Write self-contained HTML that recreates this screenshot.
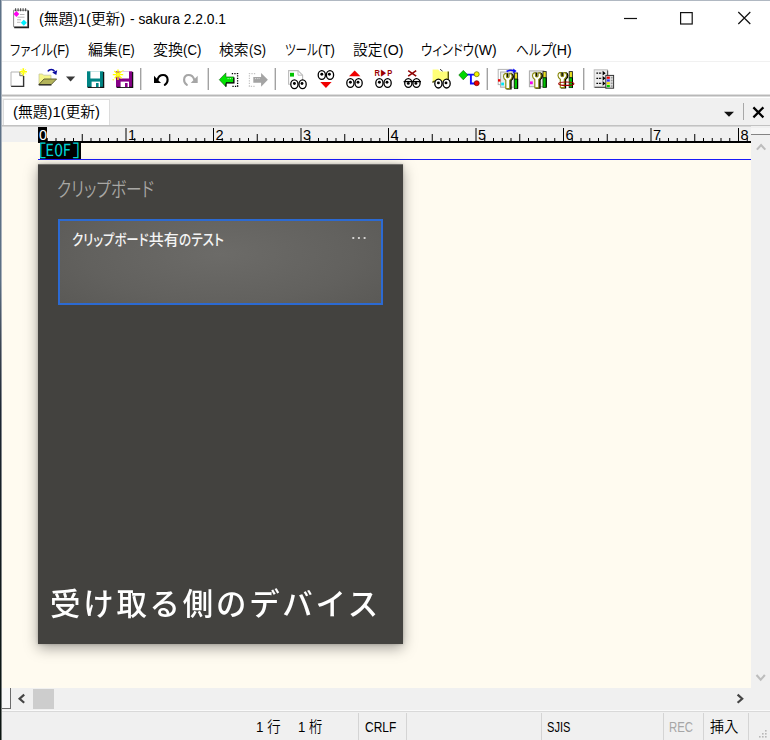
<!DOCTYPE html>
<html lang="ja">
<head>
<meta charset="utf-8">
<title>(無題)1(更新) - sakura 2.2.0.1</title>
<style>
*{box-sizing:border-box;margin:0;padding:0}
html,body{width:770px;height:740px;overflow:hidden;background:#fff}
body{position:relative;font-family:"Liberation Sans","Noto Sans CJK JP",sans-serif;font-size:15px;color:#000;font-weight:350}
.a{position:absolute}
.t{position:absolute;white-space:nowrap;line-height:20px;height:20px}
.p{position:absolute;left:0;top:0;white-space:nowrap;transform-origin:0 0;line-height:inherit}
.k{font-feature-settings:"palt"}
.m{font-family:"IPAGothic","Liberation Mono",monospace}
#edgeL{left:0;top:0;width:1px;height:740px;background:linear-gradient(#5d7288 0,#5c6f84 280px,#3c4552 345px,#1e2733 410px,#151d22 520px,#0a1410 740px)}
#edgeL2{left:1px;top:0;width:1px;height:740px;background:linear-gradient(#a9b3be 0,#a8b0ba 280px,#90959c 345px,#80848a 410px,#7c8082 520px,#787c7a 740px)}
#edgeT{left:0;top:0;width:770px;height:1px;background:#b0b8c2}
#tbline{left:2px;top:94px;width:768px;height:3px;background:linear-gradient(#dedede 0,#dedede 1px,#b8b8b8 1px,#b8b8b8 2px,#dadada 2px)}
#tabbar{left:2px;top:98px;width:768px;height:27px;background:#f0f0f0}
#tab{left:3px;top:99px;width:107px;height:26px;background:#fff;border:1px solid #dcdcdc;border-bottom:none}
#rulerline{left:2px;top:125px;width:768px;height:2px;background:linear-gradient(#c2c2c2 0,#c2c2c2 1px,#d6d6d6 1px)}
#ruler{left:2px;top:127px;width:749px;height:15px;background:#f0f0f0}
#rbase{left:38px;top:141px;width:713px;height:1.5px;background:#000}
#r0{left:38px;top:127px;width:9px;height:15px;background:#000}
#editor{left:2px;top:142px;width:749px;height:546px;background:#fffbf0}
#eofbg{left:39.7px;top:142px;width:41.6px;height:16.6px;background:#000}
#blue{left:38px;top:159px;width:713px;height:1.3px;background:#1a1af8}
#vsb{left:751px;top:126px;width:19px;height:563px;background:#f0f0f0}
#vsplit{left:751px;top:128px;width:19px;height:7px;background:#f6f6f6;border-bottom:1px solid #848484}
#hsb{left:2px;top:688px;width:768px;height:21px;background:#f0f0f0}
#hsplit{left:2px;top:688px;width:9px;height:21px;background:#f8f8f8;border-right:1px solid #6c6c6c;border-bottom:1px solid #6c6c6c}
#hthumb{left:33px;top:689px;width:21px;height:19.5px;background:#cdcdcd}
#status{left:2px;top:709px;width:768px;height:31px;background:#f0f0f0}
#stline{left:2px;top:710px;width:768px;height:2px;background:linear-gradient(#fafafa 0,#fafafa 1px,#d9d9d9 1px)}
.vs{position:absolute;top:713px;width:1px;height:27px;background:#d4d4d4}
#panel{left:37.5px;top:164px;width:365.5px;height:480px;background:#43423f;border-top:1px solid #6f6d6a;box-shadow:0 4px 13px rgba(0,0,0,.36),0 0 3px rgba(0,0,0,.2)}
#card{left:58px;top:219px;width:325.2px;height:85.5px;background:radial-gradient(ellipse 75% 110% at 50% 40%,#6c6b68 0,#62615e 55%,#575653 100%);border:2.8px solid #2c6ad2}
</style>
</head>
<body>
<div class="a" id="tbline"></div>
<div class="a" id="tabbar"></div>
<div class="a" id="tab"></div>
<div class="a" id="rulerline"></div>
<div class="a" id="ruler"></div>
<div class="a" id="editor"></div>
<div class="a" id="rbase"></div>
<div class="a" id="r0"></div>
<div class="a" id="eofbg"></div>
<div class="a" id="blue"></div>
<div class="a" id="vsb"></div>
<div class="a" id="vsplit"></div>
<div class="a" id="hsb"></div>
<div class="a" id="hsplit"></div>
<div class="a" id="hthumb"></div>
<div class="a" id="status"></div>
<div class="a" id="stline"></div>
<div class="vs" style="left:358px"></div>
<div class="vs" style="left:406px"></div>
<div class="vs" style="left:541px"></div>
<div class="vs" style="left:663px"></div>
<div class="vs" style="left:703px"></div>
<div class="vs" style="left:748px"></div>
<div class="a" id="panel"></div>
<div class="a" id="card"></div>
<div class="a" id="edgeT"></div>
<div class="a" id="edgeL"></div>
<div class="a" id="edgeL2"></div>

<svg class="a" style="left:0;top:0" width="770" height="740" viewBox="0 0 770 740">
<g fill="#000"><rect x="38" y="128" width="1" height="13"/><rect x="46.75" y="138" width="1" height="3"/><rect x="55.5" y="138" width="1" height="3"/><rect x="64.25" y="138" width="1" height="3"/><rect x="73" y="138" width="1" height="3"/><rect x="81.75" y="134" width="1" height="7"/><rect x="90.5" y="138" width="1" height="3"/><rect x="99.25" y="138" width="1" height="3"/><rect x="108" y="138" width="1" height="3"/><rect x="116.75" y="138" width="1" height="3"/><rect x="125.5" y="128" width="1" height="13"/><rect x="134.25" y="138" width="1" height="3"/><rect x="143" y="138" width="1" height="3"/><rect x="151.75" y="138" width="1" height="3"/><rect x="160.5" y="138" width="1" height="3"/><rect x="169.25" y="134" width="1" height="7"/><rect x="178" y="138" width="1" height="3"/><rect x="186.75" y="138" width="1" height="3"/><rect x="195.5" y="138" width="1" height="3"/><rect x="204.25" y="138" width="1" height="3"/><rect x="213" y="128" width="1" height="13"/><rect x="221.75" y="138" width="1" height="3"/><rect x="230.5" y="138" width="1" height="3"/><rect x="239.25" y="138" width="1" height="3"/><rect x="248" y="138" width="1" height="3"/><rect x="256.75" y="134" width="1" height="7"/><rect x="265.5" y="138" width="1" height="3"/><rect x="274.25" y="138" width="1" height="3"/><rect x="283" y="138" width="1" height="3"/><rect x="291.75" y="138" width="1" height="3"/><rect x="300.5" y="128" width="1" height="13"/><rect x="309.25" y="138" width="1" height="3"/><rect x="318" y="138" width="1" height="3"/><rect x="326.75" y="138" width="1" height="3"/><rect x="335.5" y="138" width="1" height="3"/><rect x="344.25" y="134" width="1" height="7"/><rect x="353" y="138" width="1" height="3"/><rect x="361.75" y="138" width="1" height="3"/><rect x="370.5" y="138" width="1" height="3"/><rect x="379.25" y="138" width="1" height="3"/><rect x="388" y="128" width="1" height="13"/><rect x="396.75" y="138" width="1" height="3"/><rect x="405.5" y="138" width="1" height="3"/><rect x="414.25" y="138" width="1" height="3"/><rect x="423" y="138" width="1" height="3"/><rect x="431.75" y="134" width="1" height="7"/><rect x="440.5" y="138" width="1" height="3"/><rect x="449.25" y="138" width="1" height="3"/><rect x="458" y="138" width="1" height="3"/><rect x="466.75" y="138" width="1" height="3"/><rect x="475.5" y="128" width="1" height="13"/><rect x="484.25" y="138" width="1" height="3"/><rect x="493" y="138" width="1" height="3"/><rect x="501.75" y="138" width="1" height="3"/><rect x="510.5" y="138" width="1" height="3"/><rect x="519.25" y="134" width="1" height="7"/><rect x="528" y="138" width="1" height="3"/><rect x="536.75" y="138" width="1" height="3"/><rect x="545.5" y="138" width="1" height="3"/><rect x="554.25" y="138" width="1" height="3"/><rect x="563" y="128" width="1" height="13"/><rect x="571.75" y="138" width="1" height="3"/><rect x="580.5" y="138" width="1" height="3"/><rect x="589.25" y="138" width="1" height="3"/><rect x="598" y="138" width="1" height="3"/><rect x="606.75" y="134" width="1" height="7"/><rect x="615.5" y="138" width="1" height="3"/><rect x="624.25" y="138" width="1" height="3"/><rect x="633" y="138" width="1" height="3"/><rect x="641.75" y="138" width="1" height="3"/><rect x="650.5" y="128" width="1" height="13"/><rect x="659.25" y="138" width="1" height="3"/><rect x="668" y="138" width="1" height="3"/><rect x="676.75" y="138" width="1" height="3"/><rect x="685.5" y="138" width="1" height="3"/><rect x="694.25" y="134" width="1" height="7"/><rect x="703" y="138" width="1" height="3"/><rect x="711.75" y="138" width="1" height="3"/><rect x="720.5" y="138" width="1" height="3"/><rect x="729.25" y="138" width="1" height="3"/><rect x="738" y="128" width="1" height="13"/><rect x="746.75" y="138" width="1" height="3"/></g>

<g>
<path d="M13.6 10.2h14.2v16.6h-14.2z" fill="#fff" stroke="#8a8a8a" stroke-width="1"/>
<path d="M28.3 10.5v17H14.2" fill="none" stroke="#222" stroke-width="1.5"/>
<path d="M15.6 11.2v-3" stroke="#4a4a4a" stroke-width="1.1" fill="none"/>
<path d="M18.1 11.2v-3" stroke="#4a4a4a" stroke-width="1.1" fill="none"/>
<path d="M20.6 11.2v-3" stroke="#4a4a4a" stroke-width="1.1" fill="none"/>
<path d="M23.1 11.2v-3" stroke="#4a4a4a" stroke-width="1.1" fill="none"/>
<path d="M25.6 11.2v-3" stroke="#4a4a4a" stroke-width="1.1" fill="none"/>
<path d="M20 14.5H24.5" stroke="#b8b8b8" stroke-width="1"/>
<path d="M17.5 17.2H24.5" stroke="#b8b8b8" stroke-width="1"/>
<path d="M17 19.8H21" stroke="#b8b8b8" stroke-width="1"/>
<path d="M17 22.3H20.5" stroke="#b8b8b8" stroke-width="1"/>
<path d="M16.4 11l2.9 3-2.9 3-2.9-3z" fill="#ff00f0"/>
<path d="M23.8 19.7l3 3-3 3-3-3z" fill="#00f0ff"/>
</g>
<path d="M624 18.5h13" stroke="#111" stroke-width="1.2"/>
<rect x="680.6" y="12.6" width="11.6" height="11.4" fill="none" stroke="#111" stroke-width="1.2"/>
<path d="M738.3 12l12 12M750.3 12l-12 12" stroke="#111" stroke-width="1.2" fill="none"/>
<rect x="2" y="61" width="768" height="1" fill="#f1f1f1"/>
<path d="M11 72h8.8l3.7 3.7v10.6H11z" fill="#fff" stroke="#b4b4b4" stroke-width="1"/>
<path d="M19.8 72v3.7h3.7" fill="#e8e8e8" stroke="#777" stroke-width="1"/>
<path d="M23.6 76v10.4H11.2" fill="none" stroke="#333" stroke-width="1.4"/>
<path d="M23.3 68.2v7.2M19.7 71.8h7.2" stroke="#ffff00" stroke-width="1.6"/>
<path d="M20.8 69.3l5 5M25.8 69.3l-5 5" stroke="#ffff30" stroke-width="1"/>
<path d="M39 74h3.5l1 1.2h7.5v9H39z" fill="#f6f68a" stroke="#c8c8a0" stroke-width=".8"/>
<path d="M44 79h12.6l-5.4 5.6H38.8z" fill="#b4b45a" stroke="#55552a" stroke-width=".9"/>
<path d="M38.8 84.9h12.6" stroke="#222" stroke-width="1.2"/>
<path d="M47.8 71.4c1.8-2.6 5.2-2.6 6.8 0" fill="none" stroke="#0a0aa0" stroke-width="1.6"/>
<path d="M52.2 72.4l5-2.2-.9 4.9z" fill="#0a0aa0"/>
<path d="M66 76.6h9.2l-4.6 5z" fill="#3a3a3a"/>
<rect x="87" y="71.3" width="16.4" height="15.8" fill="#008484"/>
<path d="M103.6 72v15.4H87.6" fill="none" stroke="#111" stroke-width="1.3"/>
<rect x="90.4" y="71.3" width="9.6" height="7.2" fill="#fff"/>
<rect x="91.6" y="81.6" width="8.4" height="5.5" fill="#fff"/>
<rect x="96" y="83" width="2.6" height="4.1" fill="#008484"/>
<rect x="116" y="71.3" width="16.4" height="15.8" fill="#860086"/>
<path d="M132.6 72v15.4H116.6" fill="none" stroke="#111" stroke-width="1.3"/>
<rect x="119.4" y="71.3" width="9.6" height="7.2" fill="#fff"/>
<rect x="120.6" y="81.6" width="8.4" height="5.5" fill="#fff"/>
<rect x="125" y="83" width="2.6" height="4.1" fill="#860086"/>
<g stroke="#ffff00" stroke-width="1.3" fill="none"><path d="M118 69.4v10.6M112.8 74.7h10.4M114.4 71l7.4 7.4M121.6 71.2l-7 7"/></g>
<circle cx="118" cy="74.7" r="1.8" fill="#ffff20"/>
<circle cx="113.2" cy="79.8" r=".8" fill="#ffff20"/><circle cx="123" cy="70.6" r=".7" fill="#ffff20"/>
<rect x="140" y="68" width="1.4" height="22" fill="#a2a2a2"/>
<g><path d="M157.6 79.4c1.6-5.6 9.6-6 10 .2c.1 2.4-1.1 4.2-2.8 5.2" fill="none" stroke="#000" stroke-width="2.1" stroke-linecap="round"/>
<path d="M154 75.8v7.2h7z" fill="#000"/></g>
<g transform="translate(351.7 0) scale(-1 1)"><path d="M157.6 79.4c1.6-5.6 9.6-6 10 .2c.1 2.4-1.1 4.2-2.8 5.2" fill="none" stroke="#a6a6a6" stroke-width="2.1" stroke-linecap="round"/>
<path d="M154 75.8v7.2h7z" fill="#a6a6a6"/></g>
<rect x="207.6" y="68" width="1.4" height="22" fill="#a2a2a2"/>
<path d="M231.8 73.6h5.8v12.8h-5.8" fill="none" stroke="#000" stroke-width="1.3" stroke-dasharray="1.3 1.2"/>
<path d="M219.3 79.7l6.6-6.8v4h7.8v5.9h-7.8v4z" fill="#00e400" stroke="#0a5a0a" stroke-width=".6"/>
<path d="M226 82.9h7.9v-5.4M226 86.6v-3.2" fill="none" stroke="#000" stroke-width="1.2"/>
<path d="M227.5 78.6h5" stroke="#d8ffd8" stroke-width=".9" stroke-dasharray="1.2 1"/>
<path d="M255.2 73.6h-5.8v12.8h5.8" fill="none" stroke="#c4c4c4" stroke-width="1.2" stroke-dasharray="1.3 1.2"/>
<path d="M267.9 79.7l-6.8-6.8v4h-7.8v5.9h7.8v4z" fill="#a4a4a4"/>
<path d="M255 78.6h5" stroke="#e0e0e0" stroke-width=".9" stroke-dasharray="1.2 1"/>
<rect x="274.6" y="68" width="1.4" height="22" fill="#a2a2a2"/>
<path d="M288.6 70.6h9.4l4.6 4.6v9h-14z" fill="#fff" stroke="#bcbcbc" stroke-width="1.1"/>
<path d="M298 70.6v4.6h4.6" fill="none" stroke="#bcbcbc" stroke-width="1"/>
<rect x="290" y="72.8" width="4" height="3.8" fill="#00c400"/>
<ellipse cx="294.4" cy="84.2" rx="3.6" ry="4.4" fill="#fff" stroke="#000" stroke-width="1.3"/>
<circle cx="294.4" cy="83.5" r="1.45" fill="#000"/>
<ellipse cx="302.59999999999997" cy="84.2" rx="3.6" ry="4.4" fill="#fff" stroke="#000" stroke-width="1.3"/>
<circle cx="301.99999999999994" cy="83.5" r="1.45" fill="#000"/>
<ellipse cx="321.8" cy="75" rx="3.6" ry="4.4" fill="#fff" stroke="#000" stroke-width="1.3"/>
<circle cx="321.8" cy="74.3" r="1.45" fill="#000"/>
<ellipse cx="330.0" cy="75" rx="3.6" ry="4.4" fill="#fff" stroke="#000" stroke-width="1.3"/>
<circle cx="329.4" cy="74.3" r="1.45" fill="#000"/>
<path d="M320.3 82h11.3l-5.65 5.9z" fill="#f00000"/>
<path d="M349 76.3h11.4l-5.7-5.8z" fill="#f00000"/>
<ellipse cx="350.4" cy="83" rx="3.6" ry="4.4" fill="#fff" stroke="#000" stroke-width="1.3"/>
<circle cx="350.4" cy="82.3" r="1.45" fill="#000"/>
<ellipse cx="358.59999999999997" cy="83" rx="3.6" ry="4.4" fill="#fff" stroke="#000" stroke-width="1.3"/>
<circle cx="357.99999999999994" cy="82.3" r="1.45" fill="#000"/>
<text x="374.6" y="76.4" font-family="Liberation Sans,sans-serif" font-weight="700" font-size="8.4" fill="#9a0000" textLength="17.6" lengthAdjust="spacingAndGlyphs">R▶P</text>
<ellipse cx="379.4" cy="83" rx="3.6" ry="4.4" fill="#fff" stroke="#000" stroke-width="1.3"/>
<circle cx="379.4" cy="82.3" r="1.45" fill="#000"/>
<ellipse cx="387.59999999999997" cy="83" rx="3.6" ry="4.4" fill="#fff" stroke="#000" stroke-width="1.3"/>
<circle cx="386.99999999999994" cy="82.3" r="1.45" fill="#000"/>
<path d="M408.2 70.6l8 5.6M416.2 70.6l-8 5.6" stroke="#900000" stroke-width="1.5"/>
<ellipse cx="408.3" cy="83" rx="3.6" ry="4.4" fill="#fff" stroke="#000" stroke-width="1.3"/>
<circle cx="408.3" cy="83.4" r="1.45" fill="#000"/>
<ellipse cx="416.5" cy="83" rx="3.6" ry="4.4" fill="#fff" stroke="#000" stroke-width="1.3"/>
<circle cx="415.9" cy="83.4" r="1.45" fill="#000"/>
<path d="M403.6 81.6h17.4" stroke="#000" stroke-width="1.3"/>
<path d="M405.2 81h6.2M413.4 81h6.2" stroke="#fff" stroke-width="0"/>
<path d="M432.6 69.4h5.6l1.6 2h8.4v9.6h-15.6z" fill="#ffff78"/>
<path d="M448.3 71.4v9.4" stroke="#55550a" stroke-width="1.4"/>
<path d="M440 69.2l2.6 2" stroke="#444" stroke-width="1"/>
<path d="M432.4 82.4l2.4-1.6" stroke="#55550a" stroke-width="1.4"/>
<ellipse cx="438.4" cy="83.6" rx="3.6" ry="4.4" fill="#fff" stroke="#000" stroke-width="1.3"/>
<circle cx="438.4" cy="82.89999999999999" r="1.45" fill="#000"/>
<ellipse cx="446.59999999999997" cy="83.6" rx="3.6" ry="4.4" fill="#fff" stroke="#000" stroke-width="1.3"/>
<circle cx="445.99999999999994" cy="82.89999999999999" r="1.45" fill="#000"/>
<path d="M470.9 74.6v8.9h4.5M466 74.6h9" fill="none" stroke="#1010ff" stroke-width="1.9"/>
<path d="M463.3 70.4l4.5 4.6-4.5 4.8-4.5-4.8z" fill="#00d800" stroke="#087008" stroke-width=".7"/>
<circle cx="476.7" cy="74.2" r="2.5" fill="#f4f400" stroke="#606000" stroke-width=".7"/>
<circle cx="476.7" cy="83.2" r="2.5" fill="#f00000" stroke="#600000" stroke-width=".7"/>
<rect x="486.6" y="68" width="1.4" height="22" fill="#a2a2a2"/>
<rect x="498.2" y="69.4" width="14" height="15.2" fill="#fff" stroke="#b4b4b4" stroke-width="1"/>
<rect x="500.6" y="72" width="13.4" height="15.2" fill="#ececec" stroke="#aaa" stroke-width="1"/>
<path d="M506.6 71.4c2.4-1.4 5-1.4 7.4-.6" fill="none" stroke="#0a0aff" stroke-width="1.7"/>
<path d="M513.2 68.4l3.4 2.6-3.4 2.6z" fill="#0a0aff"/>
<rect x="498" y="79.2" width="2.4" height="2.4" fill="#e80000"/>
<rect x="501.2" y="82.6" width="2.8" height="2.8" fill="#00e8f8"/>
<path d="M505.2 73.6C503.0 74.6 502.59999999999997 78.19999999999999 505.8 80.19999999999999V88.6H509.8V80.19999999999999C513.0 78.19999999999999 512.6 74.6 510.4 73.6H509.09999999999997V76.6C509.09999999999997 78.19999999999999 506.5 78.19999999999999 506.5 76.6V73.6Z" fill="#000" stroke="#000" stroke-width="1.2" transform="translate(1.25 .3)"/>
<path d="M505.2 73.6C503.0 74.6 502.59999999999997 78.19999999999999 505.8 80.19999999999999V88.6H509.8V80.19999999999999C513.0 78.19999999999999 512.6 74.6 510.4 73.6H509.09999999999997V76.6C509.09999999999997 78.19999999999999 506.5 78.19999999999999 506.5 76.6V73.6Z" fill="#fff" stroke="#8a8a10" stroke-width="1.15" stroke-linejoin="round"/>
<rect x="514.4" y="73" width="3.2" height="6.2" fill="#e8e020" stroke="#222" stroke-width=".9"/>
<rect x="514.4" y="79.2" width="3.2" height="9.399999999999999" fill="#00c400" stroke="#0a3a0a" stroke-width=".9"/>
<path d="M517.6999999999999 79v9.6" stroke="#000" stroke-width="1"/>
<rect x="529.4" y="70.9" width="14.4" height="15.8" fill="#ececec" stroke="#aaa" stroke-width="1"/>
<rect x="530" y="81.4" width="2.8" height="2.8" fill="#f800f0"/>
<path d="M534.2 72.8C532.0 73.8 531.6 77.39999999999999 534.8000000000001 79.39999999999999V87.8H538.8000000000001V79.39999999999999C542.0 77.39999999999999 541.6 73.8 539.4000000000001 72.8H538.1V75.8C538.1 77.39999999999999 535.5 77.39999999999999 535.5 75.8V72.8Z" fill="#000" stroke="#000" stroke-width="1.2" transform="translate(1.25 .3)"/>
<path d="M534.2 72.8C532.0 73.8 531.6 77.39999999999999 534.8000000000001 79.39999999999999V87.8H538.8000000000001V79.39999999999999C542.0 77.39999999999999 541.6 73.8 539.4000000000001 72.8H538.1V75.8C538.1 77.39999999999999 535.5 77.39999999999999 535.5 75.8V72.8Z" fill="#fff" stroke="#8a8a10" stroke-width="1.15" stroke-linejoin="round"/>
<rect x="543" y="71.6" width="3.2" height="6.2" fill="#e8e020" stroke="#222" stroke-width=".9"/>
<rect x="543" y="77.8" width="3.2" height="9.600000000000001" fill="#00c400" stroke="#0a3a0a" stroke-width=".9"/>
<path d="M546.3 77.6v9.8" stroke="#000" stroke-width="1"/>
<path d="M559.7 72.6C557.5 73.6 557.1 77.19999999999999 560.3000000000001 79.19999999999999V87.6H564.3000000000001V79.19999999999999C567.5 77.19999999999999 567.1 73.6 564.9000000000001 72.6H563.6V75.6C563.6 77.19999999999999 561.0 77.19999999999999 561.0 75.6V72.6Z" fill="#000" stroke="#000" stroke-width="1.2" transform="translate(1.25 .3)"/>
<path d="M559.7 72.6C557.5 73.6 557.1 77.19999999999999 560.3000000000001 79.19999999999999V87.6H564.3000000000001V79.19999999999999C567.5 77.19999999999999 567.1 73.6 564.9000000000001 72.6H563.6V75.6C563.6 77.19999999999999 561.0 77.19999999999999 561.0 75.6V72.6Z" fill="#fff" stroke="#8a8a10" stroke-width="1.15" stroke-linejoin="round"/>
<rect x="569.2" y="71.6" width="3.2" height="6.2" fill="#e8e020" stroke="#222" stroke-width=".9"/>
<rect x="569.2" y="77.8" width="3.2" height="9.8" fill="#00c400" stroke="#0a3a0a" stroke-width=".9"/>
<path d="M572.5 77.6v10" stroke="#000" stroke-width="1"/>
<ellipse cx="566.3" cy="83.7" rx="7.6" ry="1.7" fill="none" stroke="#a40000" stroke-width="1.2"/>
<rect x="583" y="68" width="1.4" height="22" fill="#a2a2a2"/>
<rect x="594.2" y="69.8" width="13.2" height="17.4" fill="#ededed" stroke="#bdbdbd" stroke-width="1"/>
<path d="M607.6 70.4v17H594.6" fill="none" stroke="#555" stroke-width="1.2"/>
<path d="M596.4 73.2h5.6" stroke="#000" stroke-width="1.3" stroke-dasharray="1.7 1"/>
<path d="M602.6 70.8l3 2.4-3 2.4z" fill="#000"/>
<path d="M596.4 78.3h5.6" stroke="#000" stroke-width="1.3" stroke-dasharray="1.7 1"/>
<path d="M602.6 75.89999999999999l3 2.4-3 2.4z" fill="#000"/>
<path d="M596.4 83.4h5.6" stroke="#000" stroke-width="1.3" stroke-dasharray="1.7 1"/>
<path d="M602.6 81.0l3 2.4-3 2.4z" fill="#000"/>
<rect x="605.8" y="75.4" width="7.8" height="12.8" fill="#e4e4e4" stroke="#333" stroke-width="1"/>
<rect x="606.8" y="76.6" width="3" height="2.2" fill="#f00000"/>
<rect x="610.8" y="76.89999999999999" width="1.8" height="1.6" fill="#999"/>
<rect x="606.8" y="79.4" width="3" height="2.2" fill="#3030ff"/>
<rect x="610.8" y="79.7" width="1.8" height="1.6" fill="#999"/>
<rect x="606.8" y="82.2" width="3" height="2.2" fill="#f0e000"/>
<rect x="610.8" y="82.5" width="1.8" height="1.6" fill="#999"/>
<rect x="606.8" y="85" width="3" height="2.2" fill="#00c800"/>
<rect x="610.8" y="85.3" width="1.8" height="1.6" fill="#999"/>
<path d="M724 111.8h10l-5 5z" fill="#111"/>
<rect x="743" y="103" width="1" height="17" fill="#a8a8a8"/>
<path d="M753.4 107.4l10 10M763.4 107.4l-10 10" stroke="#000" stroke-width="2.2" fill="none"/>
<path d="M756.9 149.6l4.2-4.5 4.2 4.5" fill="none" stroke="#bdbdbd" stroke-width="2.1"/>
<path d="M756.5 675l4.2 4.6 4.2-4.6" fill="none" stroke="#bdbdbd" stroke-width="2.1"/>
<path d="M24.2 694.6l-4.6 4.1 4.6 4.1" fill="none" stroke="#454545" stroke-width="2.2"/>
<path d="M737.6 694.6l4.6 4.1-4.6 4.1" fill="none" stroke="#454545" stroke-width="2.2"/>
<rect x="765" y="736" width="1.6" height="1.6" fill="#b8b8b8"/>
<rect x="762" y="736" width="1.6" height="1.6" fill="#b8b8b8"/>
<rect x="759" y="736" width="1.6" height="1.6" fill="#b8b8b8"/>
<rect x="765" y="733" width="1.6" height="1.6" fill="#b8b8b8"/>
<rect x="762" y="733" width="1.6" height="1.6" fill="#b8b8b8"/>
<rect x="765" y="730" width="1.6" height="1.6" fill="#b8b8b8"/>
<rect x="352.3" y="236.9" width="2" height="2" rx=".4" fill="#d6d5d3"/>
<rect x="357.9" y="236.9" width="2" height="2" rx=".4" fill="#d6d5d3"/>
<rect x="363.6" y="236.9" width="2" height="2" rx=".4" fill="#d6d5d3"/>
</svg>

<div class="t" id="title" style="left:39px;top:9px;font-size:15px;"><span class="p" style="transform:scaleX(0.9736);">(無題)1(更新)</span> <span class="p" style="left:90.9px;transform:scaleX(0.9210);">- sakura 2.2.0.1</span></div>
<div class="t" id="m1" style="left:9.7px;top:40px;font-size:15px;"><span class="p k" style="transform:scaleX(0.8257);">ファイル</span><span class="p" style="left:42.9px;transform:scaleX(0.8561);">(F)</span></div>
<div class="t" id="m2" style="left:88px;top:40px;font-size:15px;"><span class="p" style="transform:scaleX(0.9928);">編集</span><span class="p" style="left:29.8px;transform:scaleX(0.8300);">(E)</span></div>
<div class="t" id="m3" style="left:153px;top:40px;font-size:15px;"><span class="p" style="transform:scaleX(1.0028);">変換</span><span class="p" style="left:30.1px;transform:scaleX(0.8786);">(C)</span></div>
<div class="t" id="m4" style="left:219.3px;top:40px;font-size:15px;"><span class="p" style="transform:scaleX(0.9862);">検索</span><span class="p" style="left:29.6px;transform:scaleX(0.8500);">(S)</span></div>
<div class="t" id="m5" style="left:284.7px;top:40px;font-size:15px;"><span class="p k" style="transform:scaleX(0.7718);">ツール</span><span class="p" style="left:32.9px;transform:scaleX(0.8822);">(T)</span></div>
<div class="t" id="m6" style="left:353.2px;top:40px;font-size:15px;"><span class="p" style="transform:scaleX(0.9795);">設定</span><span class="p" style="left:29.4px;transform:scaleX(0.9413);">(O)</span></div>
<div class="t" id="m7" style="left:421px;top:40px;font-size:15px;"><span class="p k" style="transform:scaleX(0.8306);">ウィンドウ</span><span class="p" style="left:53px;transform:scaleX(0.9356);">(W)</span></div>
<div class="t" id="m8" style="left:515.7px;top:40px;font-size:15px;"><span class="p k" style="transform:scaleX(0.8549);">ヘルプ</span><span class="p" style="left:36.8px;transform:scaleX(0.9458);">(H)</span></div>
<div class="t" id="tabt" style="left:12.7px;top:102px;font-size:15px;"><span class="p" style="transform:scaleX(0.9850);">(無題)1(更新)</span></div>
<div class="t" id="rn1" style="left:127.9px;top:124.5px;font-size:14.5px;font-weight:400;"><span class="p">1</span></div>
<div class="t" id="rn2" style="left:215.4px;top:124.5px;font-size:14.5px;font-weight:400;"><span class="p">2</span></div>
<div class="t" id="rn3" style="left:302.9px;top:124.5px;font-size:14.5px;font-weight:400;"><span class="p">3</span></div>
<div class="t" id="rn4" style="left:390.4px;top:124.5px;font-size:14.5px;font-weight:400;"><span class="p">4</span></div>
<div class="t" id="rn5" style="left:477.9px;top:124.5px;font-size:14.5px;font-weight:400;"><span class="p">5</span></div>
<div class="t" id="rn6" style="left:565.4px;top:124.5px;font-size:14.5px;font-weight:400;"><span class="p">6</span></div>
<div class="t" id="rn7" style="left:652.9px;top:124.5px;font-size:14.5px;font-weight:400;"><span class="p">7</span></div>
<div class="t" id="rn8" style="left:740.4px;top:124.5px;font-size:14.5px;font-weight:400;"><span class="p">8</span></div>
<div class="t" id="rn0" style="left:39px;top:124.5px;font-size:14.5px;color:#fff;font-weight:400;"><span class="p">0</span></div>
<div class="t" id="eof" style="left:36.8px;top:140.5px;font-size:17.5px;color:#00d2d2;"><span class="p m"><span style="position:relative;left:1.5px">[</span>EOF]</span></div>
<div class="t" id="ptitle" style="left:57.2px;top:179.5px;font-size:20px;color:#a9a8a5;"><span class="p k" style="transform:scaleX(0.7865);">クリップボード</span></div>
<div class="t" id="ctext" style="left:72.4px;top:230px;font-size:15px;color:#f4f4f4;font-weight:500;"><span class="p k" style="transform:scaleX(0.8259);">クリップボード</span><span class="p" style="left:76.4px;">共有</span><span class="p k" style="left:106.4px;transform:scaleX(0.8433);">のテスト</span></div>
<div class="t" id="caption" style="left:49.5px;top:584px;font-size:30.4px;color:#fff;line-height:40px;height:40px;font-weight:500;letter-spacing:2.8px;will-change:transform;"><span class="p">受け取る側のデバイス</span></div>
<div class="t" id="s1" style="left:256px;top:717px;font-size:15px;"><span class="p" style="transform:scaleX(0.8940);">1 行</span></div>
<div class="t" id="s2" style="left:298px;top:717px;font-size:15px;"><span class="p" style="transform:scaleX(0.8795);">1 桁</span></div>
<div class="t" id="s3" style="left:364.5px;top:717px;font-size:15px;"><span class="p" style="transform:scaleX(0.7965);">CRLF</span></div>
<div class="t" id="s4" style="left:547.1px;top:717px;font-size:15px;"><span class="p" style="transform:scaleX(0.7385);">SJIS</span></div>
<div class="t" id="s5" style="left:668.7px;top:717px;font-size:15px;color:#a6a6a6;"><span class="p" style="transform:scaleX(0.7578);">REC</span></div>
<div class="t" id="s6" style="left:709.9px;top:717px;font-size:15px;"><span class="p" style="transform:scaleX(0.9428);">挿入</span></div>
</body>
</html>
